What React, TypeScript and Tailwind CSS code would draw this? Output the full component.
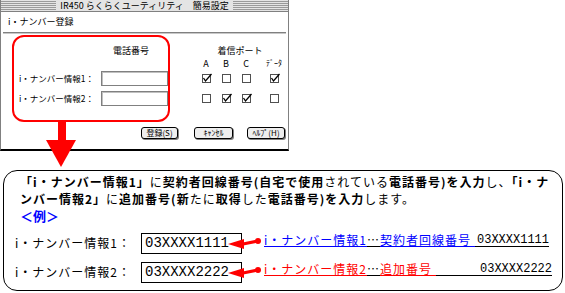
import React from 'react';

const jp = { fontFamily: '"Noto Sans CJK JP", "Noto Sans", sans-serif' };
const mono = { fontFamily: '"Liberation Mono", "DejaVu Sans Mono", monospace' };

const Check: React.FC<{ on?: boolean }> = ({ on }) => (
    <div className="w-[20px] flex justify-center">
        <div className="relative w-[9px] h-[9px] border border-[#505050] bg-white">
            {on && (
                <svg className="absolute -top-[2px] -left-[1px]" width="11" height="10" viewBox="0 0 11 10">
                    <path d="M1.5 5 L3.5 8 L9.5 1" stroke="#000" strokeWidth="1.3" fill="none" />
                </svg>
            )}
        </div>
    </div>
);

const Btn: React.FC<{ w: string; label: string }> = ({ w, label }) => (
    <div
        className={`${w} h-[12px] border border-black rounded-[3px] bg-[#eeeeee] shadow-[1px_1px_0_#808080] flex items-center justify-center text-[8px] leading-none whitespace-nowrap`}
    >
        {label}
    </div>
);

const Dialog: React.FC = () => (
    <div className="relative w-[289px] h-[151px] border-l border-r border-[#808080] border-b-2 border-b-black bg-white text-black">
        {/* title bar */}
        <div className="h-[12px] border-b border-[#808080] bg-[repeating-linear-gradient(to_bottom,#e4e4e4_0px,#e4e4e4_1px,#9a9a9a_1px,#9a9a9a_2px)] flex justify-center">
            <div className="bg-[#e4e4e4] px-[4px] text-[9px] leading-[11px] whitespace-nowrap">IR450 らくらくユーティリティ　簡易設定</div>
        </div>
        <div className="h-[20px] pl-[7px] text-[9px] leading-[20px]">i・ナンバー登録</div>
        <div className="h-[2px] border-t border-b border-t-[#808080] border-b-[#c8c8c8] mx-[2px]" />

        <div className="pl-[18px] pt-[10px] text-[9px] leading-none whitespace-nowrap">
            <div className="flex h-[12px] items-center">
                <div className="w-[82px]" />
                <div className="w-[60px] text-center">電話番号</div>
                <div className="w-[35px]" />
                <div className="w-[88px] text-center">着信ポート</div>
            </div>
            <div className="flex h-[10px] mt-[2px] items-center">
                <div className="w-[177px]" />
                <div className="w-[20px] text-center">A</div>
                <div className="w-[20px] text-center">B</div>
                <div className="w-[20px] text-center">C</div>
                <div className="w-[8px]" />
                <div className="w-[20px] text-center text-[8px]">ﾃﾞｰﾀ</div>
            </div>
            <div className="flex h-[15px] mt-[3px] items-center">
                <div className="w-[82px] text-[8.5px]">i・ナンバー情報1：</div>
                <div className="w-[67px] h-[15px] border border-[#808080] bg-white shadow-[inset_1px_1px_0_#c0c0c0]" />
                <div className="w-[28px]" />
                <Check on />
                <Check />
                <Check />
                <div className="w-[8px]" />
                <Check on />
            </div>
            <div className="flex h-[15px] mt-[5px] items-center">
                <div className="w-[82px] text-[8.5px]">i・ナンバー情報2：</div>
                <div className="w-[67px] h-[15px] border border-[#808080] bg-white shadow-[inset_1px_1px_0_#c0c0c0]" />
                <div className="w-[28px]" />
                <Check />
                <Check on />
                <Check on />
                <div className="w-[8px]" />
                <Check />
            </div>
            <div className="flex mt-[21px] items-center">
                <div className="w-[122px]" />
                <Btn w="w-[37px]" label="登録(S)" />
                <div className="w-[16px]" />
                <Btn w="w-[39px]" label="ｷｬﾝｾﾙ" />
                <div className="w-[14px]" />
                <Btn w="w-[38px]" label="ﾍﾙﾌﾟ(H)" />
            </div>
        </div>

        {/* red annotation */}
        <div className="absolute left-[11px] top-[35px] w-[158px] h-[87px] border-2 border-[#ff0000] rounded-[12px]" />
        <svg className="absolute left-[44px] top-[120px]" width="32" height="48" viewBox="0 0 32 48">
            <rect x="13" y="0" width="8" height="21" fill="#ff0000" />
            <polygon points="1,20 31,20 16,47" fill="#ff0000" />
        </svg>
    </div>
);

const Pointer: React.FC = () => (
    <svg className="-ml-[14px] shrink-0" width="36" height="14" viewBox="0 0 36 14">
        <polygon points="0,8 16,3 16,13" fill="#ff0000" />
        <path d="M15 8 L30 5" stroke="#ff0000" strokeWidth="3" />
        <circle cx="30" cy="5" r="3" fill="#ff0000" />
    </svg>
);

const ExampleRow: React.FC<{ n: string; num: string; desc: string; color: string; border: string; w: string }> = ({
    n,
    num,
    desc,
    color,
    border,
    w,
}) => (
    <div className="flex h-[22px] items-center pl-[11px] whitespace-nowrap">
        <div className="w-[126px] text-[12px] tracking-[1px]">i・ナンバー情報{n}：</div>
        <div className="w-[101px] h-[21px] border border-black flex items-center pl-[3px] text-[14px]" style={mono}>
            {num}
        </div>
        <Pointer />
        <div className={`${w} flex items-end text-[12px] leading-[12px] mb-[5px] tracking-[1px]`}>
            <span className={`${color} border-b ${border}`}>i・ナンバー情報{n}</span>
            <span className="border-b border-black">…</span>
            <span className={`${color} border-b ${border} pr-[4px]`}>{desc}</span>
            <span className="flex-1 text-right border-b border-black tracking-normal" style={mono}>
                {num}
            </span>
        </div>
    </div>
);

export default function App() {
    return (
        <div className="w-[565px] h-[293px] bg-white flex flex-col text-black overflow-hidden" style={jp}>
            <Dialog />
            <div className="mt-[19px] ml-[3px] w-[560px] h-[121px] border border-black rounded-[14px]">
                <div className="pl-[16px] pt-[2px] text-[12px] leading-[17px] tracking-[1px] whitespace-nowrap">
                    <div>
                        <b>「i・ナンバー情報1」</b>に<b>契約者回線番号(自宅で使用</b>されている<b>電話番号)を入力</b>し、<b>「i・ナ</b>
                    </div>
                    <div>
                        <b>ンバー情報2」</b>に<b>追加番号(新</b>たに<b>取得</b>した<b>電話番号)を入力</b>します。
                    </div>
                </div>
                <div className="pl-[16px] h-[18px] leading-[18px] text-[13px] font-bold text-[#0000ff]">＜例＞</div>
                <div className="mt-[7px]">
                    <ExampleRow n="1" num="03XXXX1111" desc="契約者回線番号" color="text-[#0000ff]" border="border-[#0000ff]" w="w-[285px]" />
                </div>
                <div className="mt-[7px]">
                    <ExampleRow n="2" num="03XXXX2222" desc="追加番号" color="text-[#ff0000]" border="border-[#ff0000]" w="w-[288px]" />
                </div>
            </div>
        </div>
    );
}
